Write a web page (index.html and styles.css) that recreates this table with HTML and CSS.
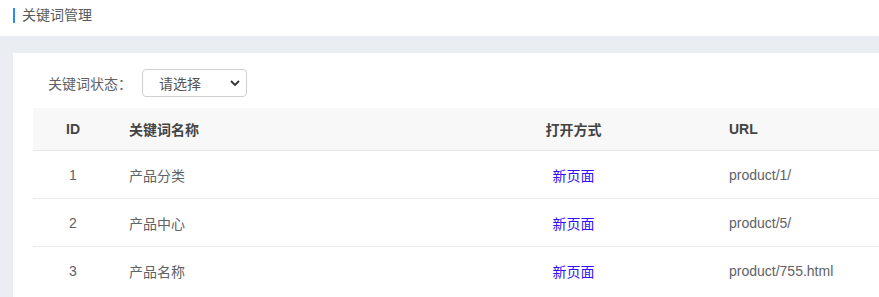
FILE: index.html
```html
<!DOCTYPE html>
<html lang="zh-CN">
<head>
<meta charset="utf-8">
<title>关键词管理</title>
<link rel="stylesheet" href="styles.css">
</head>
<body>
<div class="page-header">
  <span class="bar"></span>
  <span class="title">关键词管理</span>
</div>
<div class="main">
  <div class="card">
    <div class="filter">
      <span class="filter-label">关键词状态：</span>
      <div class="select">
        <span class="select-text">请选择</span>
        <svg class="chev" width="10" height="6" viewBox="0 0 10 6"><path d="M1 1 L5 5 L9 1" fill="none" stroke="#333" stroke-width="1.8"/></svg>
      </div>
    </div>
    <table class="grid">
      <colgroup>
        <col class="c-id"><col class="c-name"><col class="c-open"><col class="c-url">
      </colgroup>
      <thead>
        <tr><th class="center">ID</th><th>关键词名称</th><th class="center">打开方式</th><th>URL</th></tr>
      </thead>
      <tbody>
        <tr><td class="center">1</td><td>产品分类</td><td class="center"><span class="link">新页面</span></td><td>product/1/</td></tr>
        <tr><td class="center">2</td><td>产品中心</td><td class="center"><span class="link">新页面</span></td><td>product/5/</td></tr>
        <tr><td class="center">3</td><td>产品名称</td><td class="center"><span class="link">新页面</span></td><td>product/755.html</td></tr>
      </tbody>
    </table>
  </div>
</div>
</body>
</html>
```
FILE: styles.css
```css
html, body {
  margin: 0;
  padding: 0;
  background: #ffffff;
  overflow: hidden;
}
body {
  font-family: "Liberation Sans", "Noto Sans CJK SC", sans-serif;
  font-size: 14px;
  color: #606266;
}
.page-header {
  display: flex;
  align-items: center;
  height: 36px;
  padding: 0 13px;
  box-sizing: border-box;
  padding-bottom: 5px;
}
.bar {
  width: 2px;
  height: 15px;
  background: #2d8cf0;
}
.title {
  margin-left: 7px;
  font-size: 14px;
  color: #5a5a5a;
  line-height: 15px;
}
.main {
  background: #eaedf2;
  padding: 17px 0 0 13px;
  height: 261px;
  box-sizing: border-box;
}
.card {
  background: #ffffff;
  height: 100%;
  padding: 16px 0 0 20px;
  box-sizing: border-box;
}
.filter {
  display: flex;
  align-items: center;
  height: 28px;
  margin-bottom: 11px;
}
.filter-label {
  margin-left: 15px;
  width: 94px;
  color: #606266;
}
.select {
  width: 105px;
  height: 28px;
  box-sizing: border-box;
  border: 1px solid #cfcfcf;
  border-radius: 4px;
  display: flex;
  align-items: center;
  justify-content: space-between;
  padding: 0 6px 0 16px;
}
.select-text {
  color: #555;
}
.grid {
  width: 100%;
  border-collapse: collapse;
  table-layout: fixed;
}
.c-id { width: 80px; }
.c-name { width: 321px; }
.c-open { width: 279px; }
.grid th {
  background: #f8f8f8;
  height: 42px;
  font-weight: bold;
  color: #444;
  text-align: left;
  padding: 0 16px;
  border-bottom: 1px solid #e6e6e6;
}
.grid td {
  height: 47px;
  padding: 0 16px;
  border-bottom: 1px solid #e9e9e9;
  color: #606266;
}
.grid tbody tr:last-child td {
  border-bottom: none;
}
.grid th.center, .grid td.center {
  text-align: center;
  padding: 0;
}
.link {
  color: #2f10f5;
}
```
